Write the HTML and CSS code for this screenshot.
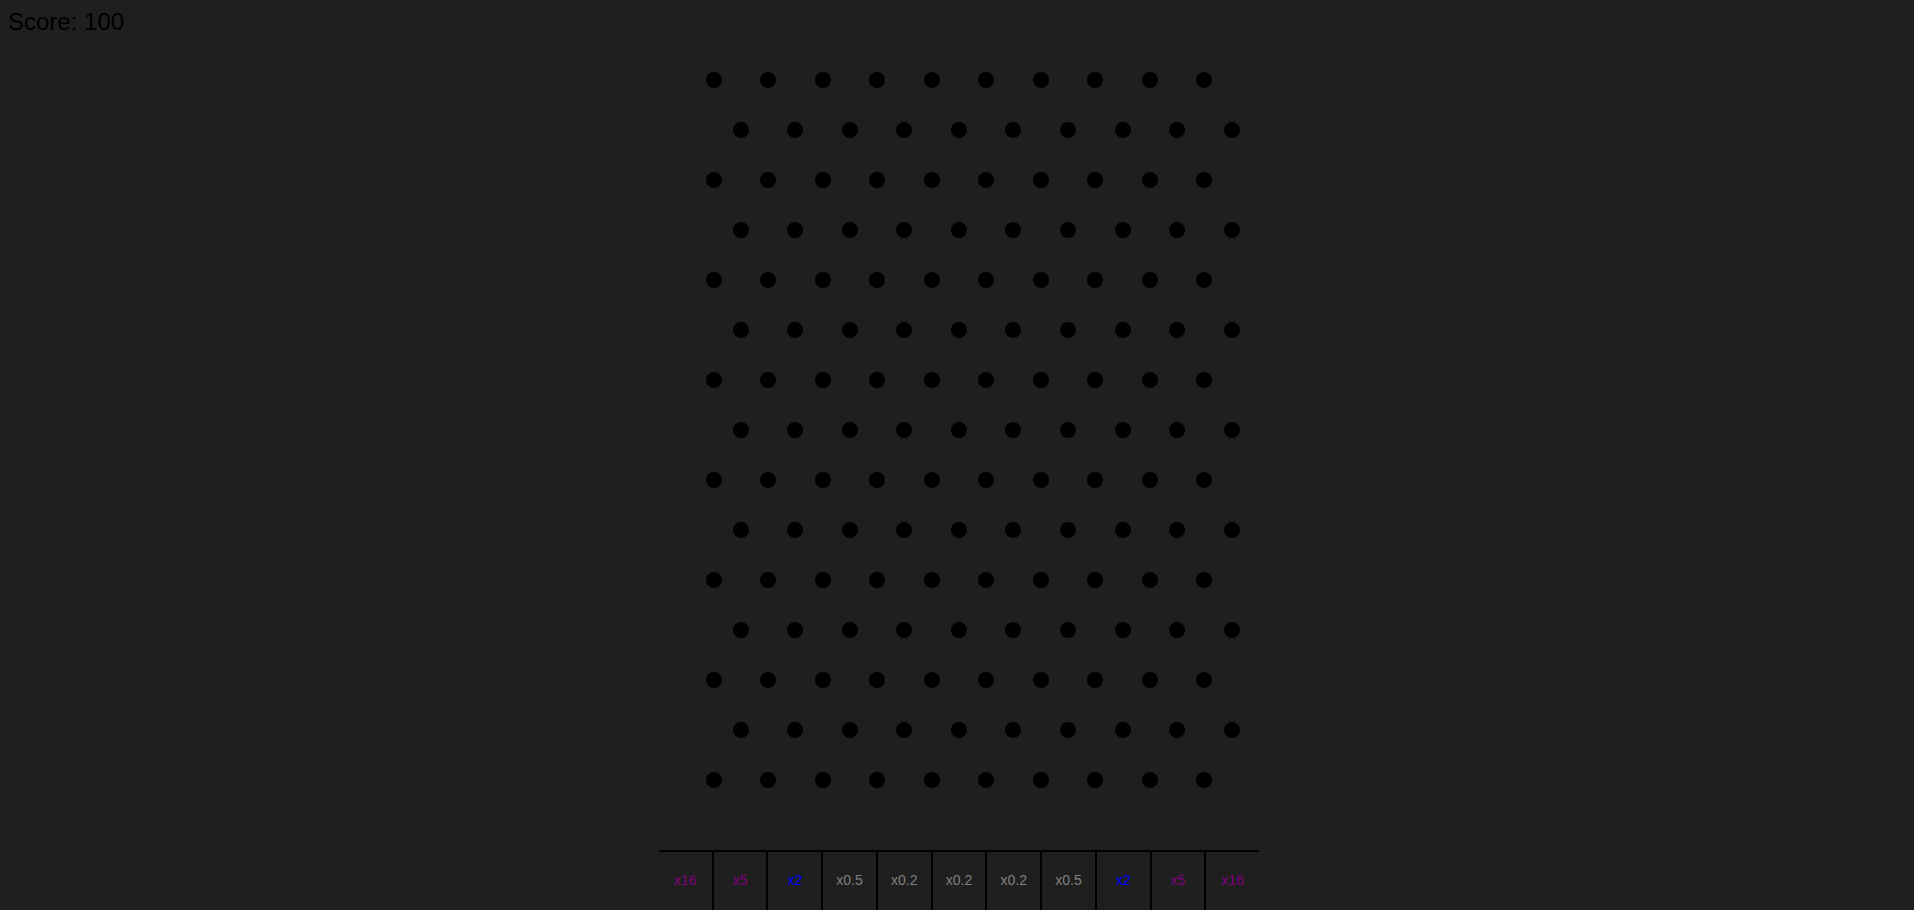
FILE: index.html
```html
<!DOCTYPE html>
<html lang="en">
<head>
<meta charset="utf-8">
<title>Plinko</title>
<link rel="stylesheet" href="styles.css">
</head>
<body>
<div class="score">Score: 100</div>
<div class="stage">
  <div class="board">
    <div class="pegs">
      <div class="row"><i></i><i></i><i></i><i></i><i></i><i></i><i></i><i></i><i></i><i></i></div>
      <div class="row odd"><i></i><i></i><i></i><i></i><i></i><i></i><i></i><i></i><i></i><i></i></div>
      <div class="row"><i></i><i></i><i></i><i></i><i></i><i></i><i></i><i></i><i></i><i></i></div>
      <div class="row odd"><i></i><i></i><i></i><i></i><i></i><i></i><i></i><i></i><i></i><i></i></div>
      <div class="row"><i></i><i></i><i></i><i></i><i></i><i></i><i></i><i></i><i></i><i></i></div>
      <div class="row odd"><i></i><i></i><i></i><i></i><i></i><i></i><i></i><i></i><i></i><i></i></div>
      <div class="row"><i></i><i></i><i></i><i></i><i></i><i></i><i></i><i></i><i></i><i></i></div>
      <div class="row odd"><i></i><i></i><i></i><i></i><i></i><i></i><i></i><i></i><i></i><i></i></div>
      <div class="row"><i></i><i></i><i></i><i></i><i></i><i></i><i></i><i></i><i></i><i></i></div>
      <div class="row odd"><i></i><i></i><i></i><i></i><i></i><i></i><i></i><i></i><i></i><i></i></div>
      <div class="row"><i></i><i></i><i></i><i></i><i></i><i></i><i></i><i></i><i></i><i></i></div>
      <div class="row odd"><i></i><i></i><i></i><i></i><i></i><i></i><i></i><i></i><i></i><i></i></div>
      <div class="row"><i></i><i></i><i></i><i></i><i></i><i></i><i></i><i></i><i></i><i></i></div>
      <div class="row odd"><i></i><i></i><i></i><i></i><i></i><i></i><i></i><i></i><i></i><i></i></div>
      <div class="row"><i></i><i></i><i></i><i></i><i></i><i></i><i></i><i></i><i></i><i></i></div>
    </div>
    <div class="slots">
      <div class="slot high">x16</div>
      <div class="slot high">x5</div>
      <div class="slot mid">x2</div>
      <div class="slot low">x0.5</div>
      <div class="slot low">x0.2</div>
      <div class="slot low">x0.2</div>
      <div class="slot low">x0.2</div>
      <div class="slot low">x0.5</div>
      <div class="slot mid">x2</div>
      <div class="slot high">x5</div>
      <div class="slot high">x16</div>
    </div>
  </div>
</div>
</body>
</html>
```

FILE: styles.css
```css
html, body {
  background: #1f1f1f;
}
body {
  margin: 8px;
  font-family: "Liberation Sans", Arial, sans-serif;
  overflow: hidden;
}
.score {
  font-size: 24px;
  line-height: 28px;
  color: #000;
}
.stage {
  display: flex;
  justify-content: center;
  padding-left: 4px;
  margin-top: 19px;
}
.board {
  --cell: calc(600px / 11);
  width: 600px;
  display: flex;
  flex-direction: column;
}
.pegs {
  display: flex;
  flex-direction: column;
  padding-bottom: 45px;
}
.row {
  height: 50px;
  display: flex;
  align-items: center;
  gap: calc(var(--cell) - 16px);
  padding-left: calc(var(--cell) - 8px);
}
.row.odd {
  padding-left: calc(var(--cell) * 1.5 - 8px);
}
.row i {
  display: block;
  width: 16px;
  height: 16px;
  border-radius: 50%;
  background: #000;
  flex: none;
}
.slots {
  display: flex;
  border-top: 2px solid #000;
  height: 58px;
}
.slot {
  flex: 1 1 0;
  box-sizing: border-box;
  display: flex;
  align-items: center;
  justify-content: center;
  font-size: 14px;
  padding-bottom: 2px;
}
.slot + .slot {
  border-left: 2px solid #000;
}
.high { color: #800080; }
.mid { color: #0000ff; }
.low { color: #808080; }
```
